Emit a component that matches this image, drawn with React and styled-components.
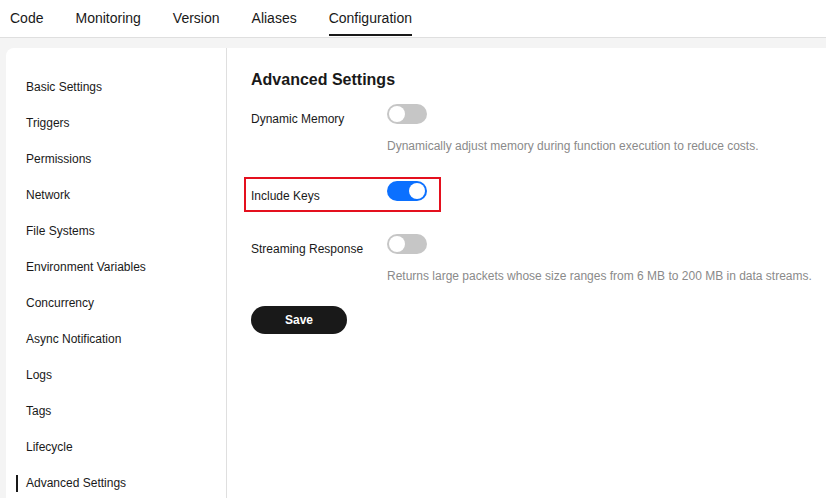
import React from 'react';
import styled, { createGlobalStyle } from 'styled-components';

/**
 * GLOBAL
 */
const GlobalStyle = createGlobalStyle`
  html, body {
    margin: 0;
    padding: 0;
    height: 100%;
    background: #ffffff;
    font-family: "Liberation Sans", Arial, sans-serif;
    color: #191919;
  }
  #root {
    height: 100%;
  }
`;

/**
 * STYLED COMPONENTS
 */
const Page = styled.div`
  display: flex;
  flex-direction: column;
  height: 100vh;
  overflow: hidden;
`;

const TabBar = styled.div`
  display: flex;
  gap: 32px;
  height: 37px;
  padding-left: 10px;
  border-bottom: 1px solid #dfdfdf;
  background: #ffffff;
  flex-shrink: 0;
`;

const Tab = styled.div`
  position: relative;
  font-size: 14px;
  line-height: 37px;
  height: 37px;
  color: #191919;
  white-space: nowrap;
  ${({ active }) => active && `
    &::after {
      content: '';
      position: absolute;
      left: 0;
      right: 0;
      bottom: 1px;
      height: 2px;
      background: #191919;
    }
  `}
`;

const Body = styled.div`
  flex: 1;
  display: flex;
  background: #f4f4f4;
  padding: 10px 0 0 6px;
  min-height: 0;
`;

const Card = styled.div`
  flex: 1;
  display: flex;
  background: #ffffff;
  border-top-left-radius: 8px;
`;

const Nav = styled.div`
  width: 221px;
  flex-shrink: 0;
  border-right: 1px solid #dfdfdf;
  padding-top: 21px;
  box-sizing: border-box;
`;

const NavItem = styled.div`
  position: relative;
  height: 36px;
  line-height: 36px;
  padding-left: 20px;
  font-size: 12px;
  color: #191919;
  white-space: nowrap;
  ${({ active }) => active && `
    &::before {
      content: '';
      position: absolute;
      left: 10px;
      top: 10px;
      width: 2px;
      height: 17px;
      background: #191919;
    }
  `}
`;

const Content = styled.div`
  flex: 1;
  padding: 21px 0 0 24px;
`;

const Title = styled.div`
  font-size: 16px;
  font-weight: bold;
  line-height: 22px;
  margin-bottom: 13px;
`;

const Rows = styled.div`
  display: flex;
  flex-direction: column;
  gap: 25px;
`;

const Row = styled.div`
  position: relative;
  display: flex;
  align-items: flex-start;
  ${({ highlighted }) => highlighted && `
    &::after {
      content: '';
      position: absolute;
      left: -7px;
      top: -4px;
      width: 193px;
      height: 31px;
      border: 2px solid #e4101e;
      pointer-events: none;
    }
  `}
`;

const Label = styled.div`
  width: 136px;
  flex-shrink: 0;
  font-size: 12px;
  line-height: 26px;
  padding-top: 2px;
  color: #191919;
`;

const Control = styled.div`
  display: flex;
  flex-direction: column;
  align-items: flex-start;
`;

const Switch = styled.div`
  position: relative;
  width: 40px;
  height: 20px;
  border-radius: 10px;
  background: ${({ on }) => (on ? '#0b70ff' : '#c6c6c6')};
  &::after {
    content: '';
    position: absolute;
    top: 2px;
    left: ${({ on }) => (on ? '22px' : '2px')};
    width: 16px;
    height: 16px;
    border-radius: 50%;
    background: #ffffff;
  }
`;

const Description = styled.div`
  margin-top: 12px;
  font-size: 12px;
  line-height: 20px;
  color: #8a8a8a;
  white-space: nowrap;
`;

const SaveButton = styled.button`
  margin-top: 20px;
  width: 96px;
  height: 28px;
  border: none;
  border-radius: 14px;
  background: #191919;
  color: #ffffff;
  font-family: "Liberation Sans", Arial, sans-serif;
  font-size: 12px;
  font-weight: bold;
  cursor: pointer;
`;

/**
 * DATA
 */
const tabs = ['Code', 'Monitoring', 'Version', 'Aliases', 'Configuration'];

const navItems = [
  'Basic Settings',
  'Triggers',
  'Permissions',
  'Network',
  'File Systems',
  'Environment Variables',
  'Concurrency',
  'Async Notification',
  'Logs',
  'Tags',
  'Lifecycle',
  'Advanced Settings',
];

const settings = [
  {
    label: 'Dynamic Memory',
    on: false,
    description: 'Dynamically adjust memory during function execution to reduce costs.',
  },
  { label: 'Include Keys', on: true, highlighted: true },
  {
    label: 'Streaming Response',
    on: false,
    description: 'Returns large packets whose size ranges from 6 MB to 200 MB in data streams.',
  },
];

/**
 * MAIN COMPONENT
 */
const App = () => (
  <Page>
    <GlobalStyle />
    <TabBar>
      {tabs.map((tab) => (
        <Tab key={tab} active={tab === 'Configuration'}>{tab}</Tab>
      ))}
    </TabBar>
    <Body>
      <Card>
        <Nav>
          {navItems.map((item) => (
            <NavItem key={item} active={item === 'Advanced Settings'}>{item}</NavItem>
          ))}
        </Nav>
        <Content>
          <Title>Advanced Settings</Title>
          <Rows>
            {settings.map((s) => (
              <Row key={s.label} highlighted={s.highlighted}>
                <Label>{s.label}</Label>
                <Control>
                  <Switch on={s.on} />
                  {s.description && <Description>{s.description}</Description>}
                </Control>
              </Row>
            ))}
          </Rows>
          <SaveButton>Save</SaveButton>
        </Content>
      </Card>
    </Body>
  </Page>
);

export default App;
